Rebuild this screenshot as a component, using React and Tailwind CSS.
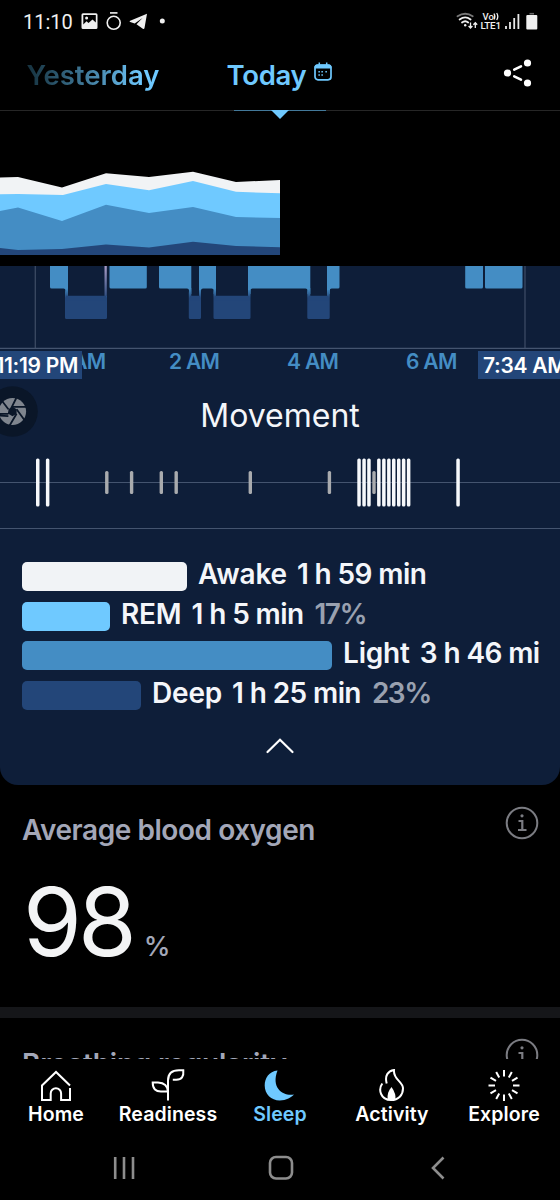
import React from "react";

const stages = [
  { name: "Awake", time: "1 h 59 min", bar: "w-[165px] bg-[#f1f3f6]" },
  { name: "REM", time: "1 h 5 min", percent: "17%", bar: "w-[88px] bg-[#6fc9ff]" },
  { name: "Light", time: "3 h 46 min", percent: "49%", bar: "w-[310px] bg-[#448dc4]" },
  { name: "Deep", time: "1 h 25 min", percent: "23%", bar: "w-[119px] bg-[#234679]" },
];

const bigMoves = [37.7, 47.6, 359, 364, 368.9, 378.8, 383.8, 388.8, 393.7, 398.7, 403.6, 408.6, 458];
const smallMoves = [106.8, 131.6, 161.3, 176.2, 250.3, 329.4, 374];

const StatusBar = () => (
  <div className="flex h-[44px] items-center pl-[23px] pr-[22px] text-[#f0f0f0]">
    <span className="w-[57px] font-['Roboto',sans-serif] text-[20px] leading-[44px]">11:10</span>
    <svg width="90" height="20" viewBox="80 12 90 20" fill="none">
      <path
        fill="#f0f0f0"
        fillRule="evenodd"
        d="M83 13.300h13a1.500 1.500 0 0 1 1.500 1.500v12.700a1.500 1.500 0 0 1-1.500 1.500H83a1.500 1.500 0 0 1-1.500-1.500V14.800a1.500 1.500 0 0 1 1.500-1.500zM83.300 15v9.500l3.200-3.200 2 1.800 4-3.500 3.300 3V15z"
      />
      <circle cx="86.600" cy="18" r="1.500" fill="#f0f0f0" />
      <circle cx="113.700" cy="22.800" r="6.500" stroke="#f0f0f0" strokeWidth="1.600" />
      <path d="M110 12.900h7.500" stroke="#d8d8d8" strokeWidth="1.800" />
      <path fill="#f0f0f0" d="M147 13.800 130.200 20.700c-.8.400-.7 1.100 0 1.400l4.500 1.300 7.800-5.400-6 6.200 6.300 4.500c.8.500 1.500.2 1.700-.8z" />
      <circle cx="162.300" cy="21" r="2.500" fill="#f0f0f0" />
    </svg>
    <svg className="ml-auto" width="82" height="20" viewBox="456 12 82 20" fill="none">
      <g strokeWidth="1.800" strokeLinecap="round">
        <path d="M457.500 16.300c5-3.300 10.500-3.300 15.200 0" stroke="#777" />
        <path d="M459.600 19.500c3.600-2.700 7.600-2.700 11 0" stroke="#f0f0f0" />
        <path d="M462 22.500c2-1.600 4.400-1.600 6.200 0" stroke="#f0f0f0" />
      </g>
      <circle cx="465.200" cy="25.200" r="1.200" fill="#f0f0f0" />
      <path
        d="M470.500 22.500v5.500m-1.900-2 1.900 2 1.900-2M475.300 28v-5.300m-1.900 2 1.900-2 1.900 2"
        stroke="#f0f0f0"
        strokeWidth="1.300"
      />
      <text x="482.500" y="20.200" fill="#f0f0f0" fontFamily="Roboto" fontWeight="500" fontSize="9.500">Vo</text>
      <path d="M494 13.500q1.700 3 0 6M496.700 13q2.200 3.500 0 7" stroke="#f0f0f0" strokeWidth="1.300" />
      <text x="480.500" y="29" fill="#f0f0f0" fontFamily="Roboto" fontWeight="500" fontSize="9.800" textLength="20.500">LTE1</text>
      <path d="M506 26v3M510 22v7M514.200 18v11M518.400 14v15" stroke="#e8e8e8" strokeWidth="1.800" />
      <path d="M529.500 13.700h4.500" stroke="#666" strokeWidth="1.600" />
      <rect x="526.300" y="15" width="11" height="14.500" rx="1" fill="#f0f0f0" />
    </svg>
  </div>
);

const DayTabs = () => (
  <div className="relative flex h-[67px] border-b border-[#262626] pt-[11px] text-[27.500px] font-semibold text-[#6fc9ff]">
    <span className="ml-[26.500px] h-[40px] w-[200px] whitespace-nowrap bg-gradient-to-r from-[#16323f] from-0% to-[#6fc9ff] to-[58%] bg-clip-text leading-[40px] text-transparent">
      Yesterday
    </span>
    <span className="leading-[40px] tracking-[-0.300px]">Today</span>
    <svg className="absolute left-[313px] top-[17px]" width="20" height="21" viewBox="0 0 20 21" fill="none">
      <rect x="2" y="4" width="16" height="14.800" rx="3" stroke="#6fc9ff" strokeWidth="1.700" />
      <path d="M2 7V5.500Q2 4 4 4h12q2 0 2 1.500V7z" fill="#6fc9ff" stroke="#6fc9ff" />
      <path d="M6.300 1.500V4M13.700 1.500V4" stroke="#6fc9ff" strokeWidth="1.500" />
      <path d="M5.400 10.700h1.500m1.500 0h1.500m2.500 0h1.500M5.400 14h1.500m1.500 0h1.500" stroke="#6fc9ff" strokeWidth="1.500" />
    </svg>
    <svg className="ml-auto mr-[27.500px] mt-[1.500px]" width="32" height="32" viewBox="0 0 32 32" fill="none">
      <g fill="#fff">
        <circle cx="6.500" cy="16" r="3.600" />
        <circle cx="26.500" cy="6" r="3.600" />
        <circle cx="26.500" cy="26" r="3.600" />
      </g>
      <path d="M13.200 12.700 20 9.300M13.200 19.300l6.800 3.400" stroke="#fff" strokeWidth="2.500" strokeLinecap="round" />
    </svg>
    <div className="absolute -bottom-px left-[234px] h-px w-[92px] bg-[#43799a]" />
    <svg className="absolute left-[271px] top-[66px]" width="18" height="9" viewBox="0 0 18 9">
      <path d="M0 0h18L9 9z" fill="#6fc9ff" />
    </svg>
  </div>
);

const TrendChart = () => (
  <div className="h-[155px]">
    <svg width="280" height="155" viewBox="0 111 280 155">
      <path fill="#f1f3f5" d="M0 177.500 18 177 62 187.500 106 173.300 149 177 193 171.700 236 182 280 180V255H0z" />
      <path fill="#6fc9ff" d="M0 194.200 18 194 63 195 106 184 149 190.200 193 181 236 191.800 280 193.300V255H0z" />
      <path fill="#448dc4" d="M0 211 18 207.500 62 221 106 204.700 149 213 193 207 236 217 280 218V255H0z" />
      <path fill="#234679" d="M0 248 18 250 62 249 106 244.500 149 247.500 193 241.700 236 246 280 247.200V255H0z" />
    </svg>
  </div>
);

const Hypnogram = () => (
  <svg className="block" width="560" height="83" viewBox="0 266 560 83">
    <path stroke="#3c4a63" strokeWidth="1.300" d="M35.300 266v82M525 266v82" />
    <g fill="#448dc4">
      <path d="M50 266h18v28h-2.500v-3.500q0-2-2-2H51.500q-1.500 0-1.500-1.500z" />
      <path d="M109.500 266h37.300v21q0 1.500-1.500 1.500H111q-1.500 0-1.500-1.500z" />
      <path d="M159 266h32.300v28h-2.300v-3.500q0-2-2-2h-26.500q-1.500 0-1.500-1.500z" />
      <path d="M199 266h17v28h-2.300v-3.500q0-2-2-2H203q-2 0-2 2v3.500h-2z" />
      <path d="M248 266h62.300v28h-2.800v-3.500q0-2-2-2H252.500q-2 0-2 2v3.500H248z" />
      <path d="M327 266h12.500v21q0 1.500-1.500 1.500h-6.300q-2 0-2 2v3.500H327z" />
      <path d="M465.200 266H483v21q0 1.500-1.500 1.500h-14.800q-1.500 0-1.500-1.500z" />
      <path d="M485 266h37.500v21q0 1.500-1.500 1.500h-34.500q-1.500 0-1.500-1.500z" />
    </g>
    <linearGradient id="fall" x1="0" y1="288" x2="0" y2="298" gradientUnits="userSpaceOnUse">
      <stop offset="0" stopColor="#448dc4" />
      <stop offset="1" stopColor="#234679" />
    </linearGradient>
    <linearGradient id="rise" x1="0" y1="266" x2="0" y2="300" gradientUnits="userSpaceOnUse">
      <stop offset="0" stopColor="#a99bc4" />
      <stop offset="1" stopColor="#234679" />
    </linearGradient>
    <path d="M104.500 266h2.300v36h-2.300z" fill="url(#rise)" />
    <g fill="url(#fall)">
      <path d="M65.500 290.500 65 293v24.500q0 1.500 1.500 1.500h39q1.500 0 1.500-1.500V296H68v-8z" />
      <path d="M189 290.500 188.800 293v24.500q0 1.500 1.500 1.500h9.200q1.500 0 1.500-1.500V290h-2v6h-7.700v-8z" />
      <path d="M213.700 290.500 213.500 293v24.500q0 1.500 1.500 1.500h34q1.500 0 1.500-1.500V290H248v6h-32v-8z" />
      <path d="M307.500 290.500 307.300 293v24.500q0 1.500 1.500 1.500h19.400q1.500 0 1.500-1.500V290H327v6h-16.700v-8z" />
    </g>
    <path fill="#234679" d="M66 295.800h40v5H66zM190 295.800h10v5h-10zM214.500 295.800h35v5h-35zM308.500 295.800h20v5h-20z" />
    <path stroke="#44546f" strokeWidth="1.300" d="M0 348.300h560" />
  </svg>
);

const TimeAxis = () => (
  <div className="relative h-[37px] text-[21px] font-semibold tracking-[-0.700px] text-[#448dc4]">
    <span className="absolute left-[47px] top-0 whitespace-nowrap leading-[26px]">12 AM</span>
    <span className="absolute left-[169px] top-0 whitespace-nowrap leading-[26px]">2 AM</span>
    <span className="absolute left-[287px] top-0 whitespace-nowrap leading-[26px]">4 AM</span>
    <span className="absolute left-[406px] top-0 whitespace-nowrap leading-[26px]">6 AM</span>
    <span className="absolute left-0 top-[2px] flex h-[28px] w-[82px] justify-end overflow-hidden whitespace-nowrap bg-[#234679] pr-[4px] leading-[29px] tracking-[-0.300px] text-white">
      11:19 PM
    </span>
    <span className="absolute right-0 top-[2px] h-[28px] w-[82px] overflow-hidden whitespace-nowrap bg-[#234679] pl-[5px] leading-[29px] tracking-[-0.300px] text-white">
      7:34 AM
    </span>
  </div>
);

const Movement = () => (
  <div className="relative h-[143px]">
    <div className="absolute left-[-25px] top-0 h-[51px] w-[63px] overflow-hidden">
      <svg className="absolute left-[12px] top-0" width="51" height="51" viewBox="-13 385.500 51 51">
        <circle cx="12.500" cy="411" r="25.300" fill="#0a1628" />
        <circle cx="12.500" cy="411" r="13.600" fill="#7f858e" />
        <path d="M12.500 406.300 16.600 408.700V413.300L12.500 415.700 8.400 413.300V408.700z" fill="#0a1628" />
        <path
          stroke="#0a1628"
          strokeWidth="1.800"
          d="M8.400 413.300 16.300 397.500M8.400 415.700-1.500 415M12.500 406.300h14M16.600 408.700 25.500 421M16.600 413.300 9 426M8.400 413.300H-2M8.400 408.700 2.500 401"
        />
      </svg>
    </div>
    <h2 className="pt-[9px] text-center text-[32px] leading-[42px] text-[#f4f6fa]">Movement</h2>
    <svg className="mt-[21px] block" width="560" height="50" viewBox="0 458 560 50">
      <path stroke="#44546f" strokeWidth="1" d="M0 482.500h560" />
      {smallMoves.map((x) => (
        <rect key={x} x={x - 1.7} y="471" width="3.400" height="23" rx="1.500" fill="#a9abae" />
      ))}
      {bigMoves.map((x) => (
        <rect key={x} x={x - 1.7} y="458.500" width="3.500" height="48" rx="1.500" fill="#f6f8fb" />
      ))}
    </svg>
    <div className="absolute bottom-0 h-px w-full bg-[#44546f]" />
  </div>
);

const SleepStages = () => (
  <div className="mt-[33px] flex flex-col gap-[10.500px] pl-[22px]">
    {stages.map((stage) => (
      <div
        key={stage.name}
        className="flex h-[29px] w-[518px] overflow-hidden whitespace-pre text-[28px] font-semibold leading-[25px] text-[#f4f6fa]"
      >
        <div className={`mr-[11px] h-[29px] shrink-0 rounded-[5px] ${stage.bar}`} />
        <span className="tracking-[-0.200px]">{stage.name}</span>
        <span className="ml-[10px] tracking-[-0.600px]">{stage.time}</span>
        {stage.percent && <span className="ml-[11px] tracking-[-1.500px] text-[#99a1b0]">{stage.percent}</span>}
      </div>
    ))}
  </div>
);

const InfoIcon = () => (
  <svg width="34" height="34" viewBox="0 0 34 34" fill="none">
    <circle cx="17" cy="17" r="15.300" stroke="#7b7c82" strokeWidth="2" />
    <path d="M13.500 15h3.800V24M13 24h8.500" stroke="#7b7c82" strokeWidth="2.200" />
    <circle cx="17" cy="9.800" r="1.600" fill="#7b7c82" />
  </svg>
);

const tabs = [
  {
    name: "Home",
    icon: <path d="M30 16.500 16 3 2 16.500V31h8.700v-6.500a5 5 0 0 1 10.400 0V31H30V19" />,
  },
  {
    name: "Readiness",
    icon: <path d="M16 31.500V11.500Q16 1.200 27 1.200h4.300q1 9.500-7 9.500h-3.500M16 22.500q-.5-8.500-10-9H.7q0 9.500 9 9H16" />,
  },
  {
    name: "Sleep",
    active: true,
    icon: (
      <path
        d="M13.500 1.500C5 2.500.7 9 .7 16.500c0 8.500 6.500 15 15 15 6.500 0 12-3.500 14.300-6C20 27.500 6.500 20 13.500 1.500z"
        fill="#6fc9ff"
        stroke="none"
      />
    ),
  },
  {
    name: "Activity",
    icon: (
      <>
        <path d="M6.300 14.500C2 20.500 4.500 31 15 31c7.500 0 12-5 12-11.500C27 12 17 11 18 1c-6 1-9.500 5.500-7.300 13.500" />
        <path d="M15.500 18q5 7 3.700 12.500h-7.500Q10.500 24 15.500 18z" fill="#fff" stroke="none" />
      </>
    ),
  },
  {
    name: "Explore",
    icon: (
      <path d="M16 1v6.500M16 25.500V32M.5 16.500H7M25 16.500h6.500M8.200 3l3 5.500M20.800 24.500l3 5.500M2.500 8.700l5.500 3.200M24 21.100l5.500 3.200M23.800 3l-3 5.500M11.200 24.500 8.200 30M29.500 8.700 24 11.900M8 21.100l-5.500 3.200" />
    ),
  },
];

const TabBar = () => (
  <div className="grid h-[76px] grid-cols-5 bg-black pt-[10px]">
    {tabs.map((tab) => (
      <div
        key={tab.name}
        className={`flex flex-col items-center text-[19.500px] font-semibold leading-[22px] tracking-[0.100px] ${tab.active ? "text-[#6fc9ff]" : "text-white"}`}
      >
        <svg width="34" height="34" viewBox="-1 0 34 34" fill="none" stroke="#fff" strokeWidth="2">
          {tab.icon}
        </svg>
        {tab.name}
      </div>
    ))}
  </div>
);

const SystemNav = () => (
  <svg className="block" width="560" height="65" viewBox="0 1135 560 65" fill="none" stroke="#8d8d8d" strokeWidth="2.600">
    <path d="M115.200 1157v22M124 1157v22M133 1157v22" />
    <rect x="270" y="1157" width="22" height="21.500" rx="6" />
    <path d="M443.500 1157.500 433 1168l10.500 10.500" />
  </svg>
);

export default function App() {
  return (
    <div className="flex h-[1200px] w-[560px] flex-col overflow-hidden bg-black font-['Inter',sans-serif]">
      <StatusBar />
      <DayTabs />
      <TrendChart />
      <div className="h-[519px] shrink-0 overflow-hidden rounded-b-[18px] bg-[#0e1e39]">
        <Hypnogram />
        <TimeAxis />
        <Movement />
        <SleepStages />
        <svg className="mx-auto mt-[28px] block" width="30" height="16" viewBox="0 0 30 16" fill="none">
          <path d="M2.500 14 15 1.800 27.500 14" stroke="#fff" strokeWidth="2.200" strokeLinecap="round" />
        </svg>
      </div>
      <div className="h-[222px] shrink-0 pl-[22px] pr-[21px] pt-[21px]">
        <div className="flex justify-between">
          <h3 className="pt-[6px] text-[28px] font-semibold leading-[36px] tracking-[-0.450px] text-[#a3a7b8]">
            Average blood oxygen
          </h3>
          <InfoIcon />
        </div>
        <div className="mt-[2px] flex items-baseline">
          <span className="ml-px text-[95px] leading-[144px] tracking-[-4px] text-[#f3f4f5]">98</span>
          <span className="ml-[11px] text-[27px] font-medium text-[#a3a7b8]">%</span>
        </div>
      </div>
      <div className="h-[11px] shrink-0 bg-[#151619]" />
      <div className="flex h-[41px] shrink-0 justify-between overflow-hidden pl-[22px] pr-[21px] pt-[20px]">
        <h3 className="whitespace-nowrap pt-[8px] text-[28px] font-semibold leading-[36px] tracking-[-0.200px] text-[#a3a7b8]">
          Breathing regularity
        </h3>
        <InfoIcon />
      </div>
      <TabBar />
      <SystemNav />
    </div>
  );
}
